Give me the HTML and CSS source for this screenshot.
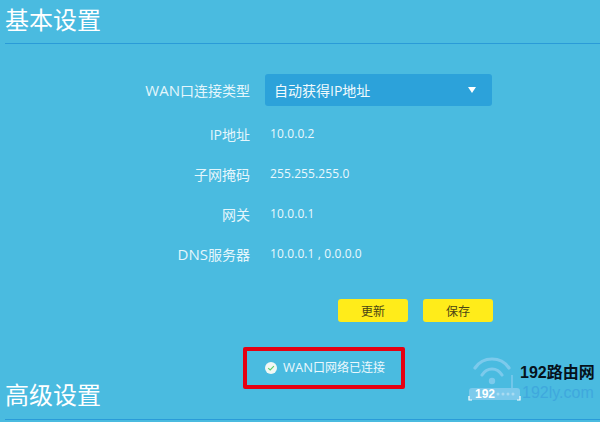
FILE: index.html
```html
<!DOCTYPE html>
<html lang="zh-CN">
<head>
<meta charset="utf-8">
<title>基本设置</title>
<link rel="stylesheet" href="styles.css">
</head>
<body>
<section class="panel">
  <h2 class="title">基本设置</h2>
  <div class="form">
    <div class="row row-select">
      <span class="label"><span class="latin">WAN</span>口连接类型</span>
      <div class="select"><span>自动获得IP地址</span><i class="caret"></i></div>
    </div>
    <div class="row"><span class="label">IP地址</span><span class="value">10.0.0.2</span></div>
    <div class="row"><span class="label">子网掩码</span><span class="value">255.255.255.0</span></div>
    <div class="row"><span class="label">网关</span><span class="value">10.0.0.1</span></div>
    <div class="row"><span class="label"><span class="latin">DNS</span>服务器</span><span class="value">10.0.0.1 , 0.0.0.0</span></div>
  </div>
  <div class="actions">
    <button class="btn">更新</button>
    <button class="btn">保存</button>
  </div>
  <div class="status">
    <svg class="check" viewBox="0 0 12 12" width="12" height="12"><circle cx="6" cy="6" r="6" fill="#f2f8f4"/><path d="M3.2 6.1 5.2 8 8.9 4.2" fill="none" stroke="#5fce6b" stroke-width="1.1"/></svg>
    <span><span class="latin-sm">WAN</span>口网络已连接</span>
  </div>
  <h2 class="title title-adv">高级设置</h2>
</section>
<div class="redbox"></div>
<div class="mark">
  <svg class="mark-icon" viewBox="0 0 54 48" width="54" height="48">
    <g fill="none" stroke="#7ccaec" stroke-width="3.2" stroke-linecap="round">
      <path d="M7 13C15 1 33 1 41 13"/>
      <path d="M14 20C19 12 29 12 34 20"/>
    </g>
    <circle cx="24" cy="26" r="3.2" fill="#7ccaec"/>
    <path d="M44 33V20" stroke="#7ccaec" stroke-width="1.6"/>
    <rect x="1" y="33" width="51" height="12" rx="3" fill="#7ccaec"/>
    <g fill="#a8dbf2"><circle cx="30" cy="39" r="1.5"/><circle cx="35" cy="39" r="1.5"/><circle cx="40" cy="39" r="1.5"/><circle cx="45" cy="39" r="1.5"/></g>
    <path d="M1 41V45H4M52 41V45H49" fill="none" stroke="#fff" stroke-width="1.2"/>
  </svg>
  <span class="mark-num">192</span>
  <span class="mark-name">192路由网</span>
  <span class="mark-url">192ly.com</span>
</div>
</body>
</html>
```
FILE: styles.css
```css
html, body { margin: 0; padding: 0; }
body {
  width: 600px;
  height: 422px;
  overflow: hidden;
  background: #4abbe0;
  color: #eaf8fd;
  font-family: "Open Sans", "Noto Sans CJK SC", sans-serif;
  position: relative;
}
.panel { padding-left: 5px; }
.title {
  margin: 0;
  height: 43px;
  border-bottom: 1px solid #2a9bd8;
  font-family: "Noto Sans CJK SC", sans-serif;
  font-weight: 400;
  font-size: 24px;
  line-height: 37px;
  color: #fff;
}
.title-adv { height: 42px; line-height: 34px; }
.form { margin-top: 30px; display: flex; flex-direction: column; }
.row { display: flex; align-items: center; height: 40px; }
.row-select { height: 32px; margin-bottom: 8px; }
.label {
  width: 245px;
  text-align: right;
  font-size: 14px;
  color: #e4f6fc;
}
.latin { font-size: 15px; }
.latin-sm { font-size: 13px; }
.value { margin: 0 0 2px 20px; font-size: 12px; letter-spacing: .1px; }
.select {
  margin-left: 15px;
  width: 227px;
  height: 32px;
  box-sizing: border-box;
  padding: 0 16px 0 9px;
  background: #2ca2da;
  border-radius: 3px;
  display: flex;
  align-items: center;
  justify-content: space-between;
  font-size: 14px;
  color: #f0fafd;
}
.caret {
  width: 0;
  height: 0;
  border-left: 4.5px solid transparent;
  border-right: 4.5px solid transparent;
  border-top: 6px solid #fff;
}
.actions { display: flex; gap: 15px; margin: 25px 0 0 333px; }
.btn {
  width: 70px;
  height: 23px;
  padding: 0;
  border: 0;
  border-radius: 3px;
  background: #ffec1a;
  color: #4a4514;
  font-family: "Noto Sans CJK SC", sans-serif;
  font-size: 12px;
}
.status {
  display: flex;
  align-items: center;
  gap: 6px;
  margin: 35px 0 0 260px;
  height: 20px;
  font-size: 12px;
}
.status svg { margin-top: 2px; }
.redbox {
  position: absolute;
  left: 243px;
  top: 347px;
  width: 154px;
  height: 34px;
  border: 4px solid #e60012;
  border-radius: 2px;
}
.mark { position: absolute; left: 468px; top: 355px; width: 132px; height: 60px; }
.mark-icon { position: absolute; left: 0; top: 0; }
.mark-num { position: absolute; left: 7px; top: 32px; font: 700 12px/14px "Liberation Sans", sans-serif; color: #fff; }
.mark-name { position: absolute; left: 52px; top: 6px; font: 700 16px/24px "Liberation Sans", "Noto Sans CJK SC", sans-serif; color: #06121c; white-space: nowrap; }
.mark-url { position: absolute; left: 54px; top: 29px; font: 400 16px/18px "Liberation Sans", sans-serif; color: #3fa8dd; }
```
